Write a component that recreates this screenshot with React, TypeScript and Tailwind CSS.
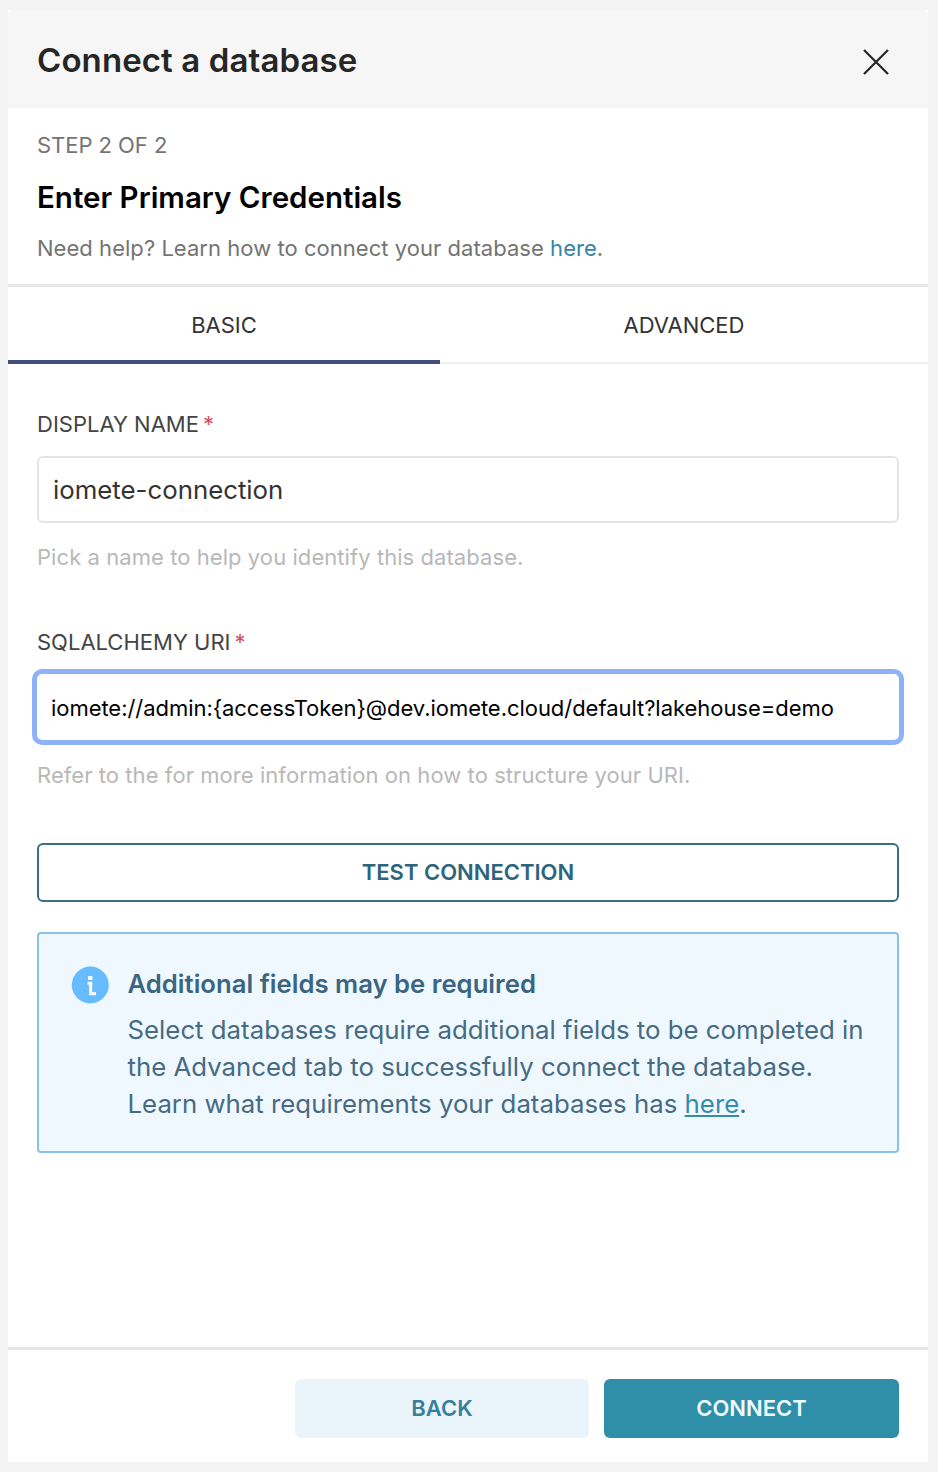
import React from 'react';

export default function App() {
  return (
    <div className="h-[1472px] w-[938px] bg-[#f4f4f4] pt-[10px] pr-[10px] pb-[10px] pl-2 font-['Inter',sans-serif]">
      <div className="flex h-full flex-col bg-white">
        <header className="flex h-[98px] items-center justify-between rounded-t-[4px] bg-[#f6f6f6] pr-[39px] pl-[29px]">
          <h1 className="mt-[2px] text-[33px] leading-[40px] font-semibold tracking-[0.1px] text-[#262626]">Connect a database</h1>
          <svg width="26" height="26" viewBox="0 0 26 26" className="mt-[6px]" fill="none" stroke="#262626" strokeWidth="2.2"><path d="M1 1 25 25M25 1 1 25" /></svg>
        </header>
        <section className="h-[179px] border-b-[3px] border-[#e8e8ea] px-[29px] pt-[21px]">
          <p className="text-[22px] leading-[32px] tracking-[-0.05px] text-[#747474]">STEP 2 OF 2</p>
          <h2 className="mt-[16px] text-[29.5px] leading-[40px] font-semibold text-black">Enter Primary Credentials</h2>
          <p className="mt-[15px] text-[22px] leading-[32px] tracking-[0.04px] text-[#747474]">Need help? Learn how to connect your database <a className="text-[#3585a5]">here</a>.</p>
        </section>
        <nav className="flex h-[77px]">
          <button className="w-[432px] border-b-4 border-[#444e7c] pt-[4px] text-[22px] text-[#333333]">BASIC</button>
          <button className="flex-1 border-b-2 border-[#f0f0f0] pt-[2px] text-[22px] text-[#333333]">ADVANCED</button>
        </nav>
        <main className="flex flex-1 flex-col px-[29px] pt-[44px]">
          <label className="text-[22px] leading-[32px] text-[#444444]">DISPLAY NAME<span className="ml-1 text-[#d94c5c]">*</span></label>
          <div className="mt-[16px] flex h-[67px] items-center rounded-md border-2 border-[#e4e4e4] px-[14px] pt-px text-[25.8px] text-[#333333]">iomete-connection</div>
          <p className="mt-[18px] text-[22px] leading-[32px] tracking-[0.065px] text-[#b8b8b8]">Pick a name to help you identify this database.</p>
          <label className="mt-[53px] text-[22px] leading-[32px] text-[#444444]">SQLALCHEMY URI<span className="ml-1 text-[#d94c5c]">*</span></label>
          <div className="-mx-[5px] mt-[11px] flex h-[76px] items-center rounded-[10px] border-[5px] border-[#8eb1f9] px-[14px] pt-[2px] text-[22px] tracking-[-0.045px] text-black">iomete://admin:&#123;accessToken&#125;@dev.iomete.cloud/default?lakehouse=demo</div>
          <p className="mt-[14px] text-[22px] leading-[32px] tracking-[0.06px] text-[#b8b8b8]">Refer to the for more information on how to structure your URI.</p>
          <button className="mt-[52px] h-[59px] rounded-md border-2 border-[#3a6f82] pb-px text-[22px] font-semibold text-[#2d647c]">TEST CONNECTION</button>
          <aside className="mt-[30px] flex h-[221px] rounded-[4px] border-2 border-[#88c3e6] bg-[#eff8ff] pt-[32px] pl-[32px]">
            <svg width="38" height="38" viewBox="0 0 38 38" className="shrink-0"><circle cx="19.3" cy="19" r="18.5" fill="#66bcfe" /><rect x="17" y="10" width="4.5" height="4" rx="1" fill="white" /><path d="M16.5 17.3H19.7V28M18.2 27.8H25" fill="none" stroke="white" strokeWidth="3" /></svg>
            <div className="-mt-px ml-[18.5px] text-[25.8px] leading-[37px] whitespace-nowrap text-[#466b83]">
              <h3 className="mb-[9px] text-[25.7px] font-semibold text-[#3b6580]">Additional fields may be required</h3>
              <p>Select databases require additional fields to be completed in</p>
              <p>the Advanced tab to successfully connect the database.</p>
              <p>Learn what requirements your databases has <a className="text-[#348baa] underline">here</a>.</p>
            </div>
          </aside>
        </main>
        <footer className="flex h-[115px] justify-end gap-[15px] border-t-[3px] border-[#e8e8ea] pt-[29px] pr-[29px]">
          <button className="h-[59px] w-[294px] rounded-md bg-[#e9f5fb] text-[22px] font-semibold text-[#38809a]">BACK</button>
          <button className="h-[59px] w-[295px] rounded-md bg-[#2f8ea8] text-[22px] font-semibold text-[#eefaff]">CONNECT</button>
        </footer>
      </div>
    </div>
  );
}
